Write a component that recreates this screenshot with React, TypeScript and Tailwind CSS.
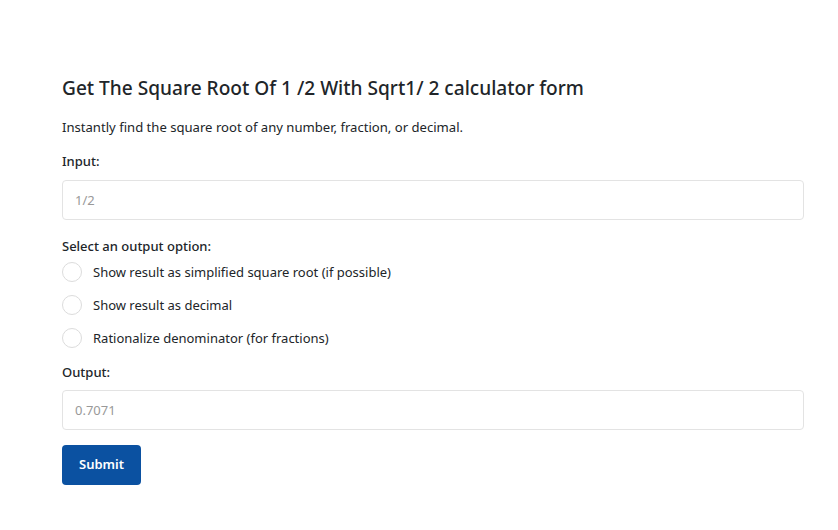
import { useState } from "react"

const options = [
  "Show result as simplified square root (if possible)",
  "Show result as decimal",
  "Rationalize denominator (for fractions)",
]

export default function App() {
  const [choice, setChoice] = useState<number | null>(null)

  return (
    <div className="min-h-screen bg-white pl-[62px] pr-[34px] pt-[74px] text-[#212529] font-['Noto_Sans',sans-serif]">
      <h2 className="text-[19.1px] font-medium leading-[28px] mb-[15px]">
        Get The Square Root Of 1 /2 With Sqrt1/ 2 calculator form
      </h2>
      <p className="text-[13.1px] leading-[20px] mb-[14px]">
        Instantly find the square root of any number, fraction, or decimal.
      </p>

      <label className="block text-[13px] font-medium leading-[20px] mb-[9px]">Input:</label>
      <input
        className="block w-full h-[40px] rounded border border-[#e3e3e3] px-3 text-[13px] placeholder-[#999] outline-none"
        placeholder="1/2"
      />

      <div className="mt-[16px] text-[13px] font-medium leading-[20px]">Select an output option:</div>
      <div className="flex flex-col gap-[13px] mt-[6px]">
        {options.map((o, i) => (
          <label key={o} className="flex items-center gap-[11px] text-[13px] leading-[20px] cursor-pointer">
            <span
              onClick={() => setChoice(i)}
              className={`w-[20px] h-[20px] rounded-full border ${
                choice === i ? "border-[#0b51a1] border-[6px]" : "border-[#dcdcdc]"
              }`}
            />
            {o}
          </label>
        ))}
      </div>

      <label className="block mt-[14px] text-[13px] font-medium leading-[20px] mb-[8px]">Output:</label>
      <input
        className="block w-full h-[40px] rounded border border-[#e3e3e3] px-3 text-[13px] placeholder-[#999] outline-none"
        placeholder="0.7071"
        readOnly
      />

      <button className="mt-[15px] h-[40px] w-[79px] rounded bg-[#0b51a1] text-white text-[13px] font-semibold">
        Submit
      </button>
    </div>
  )
}
